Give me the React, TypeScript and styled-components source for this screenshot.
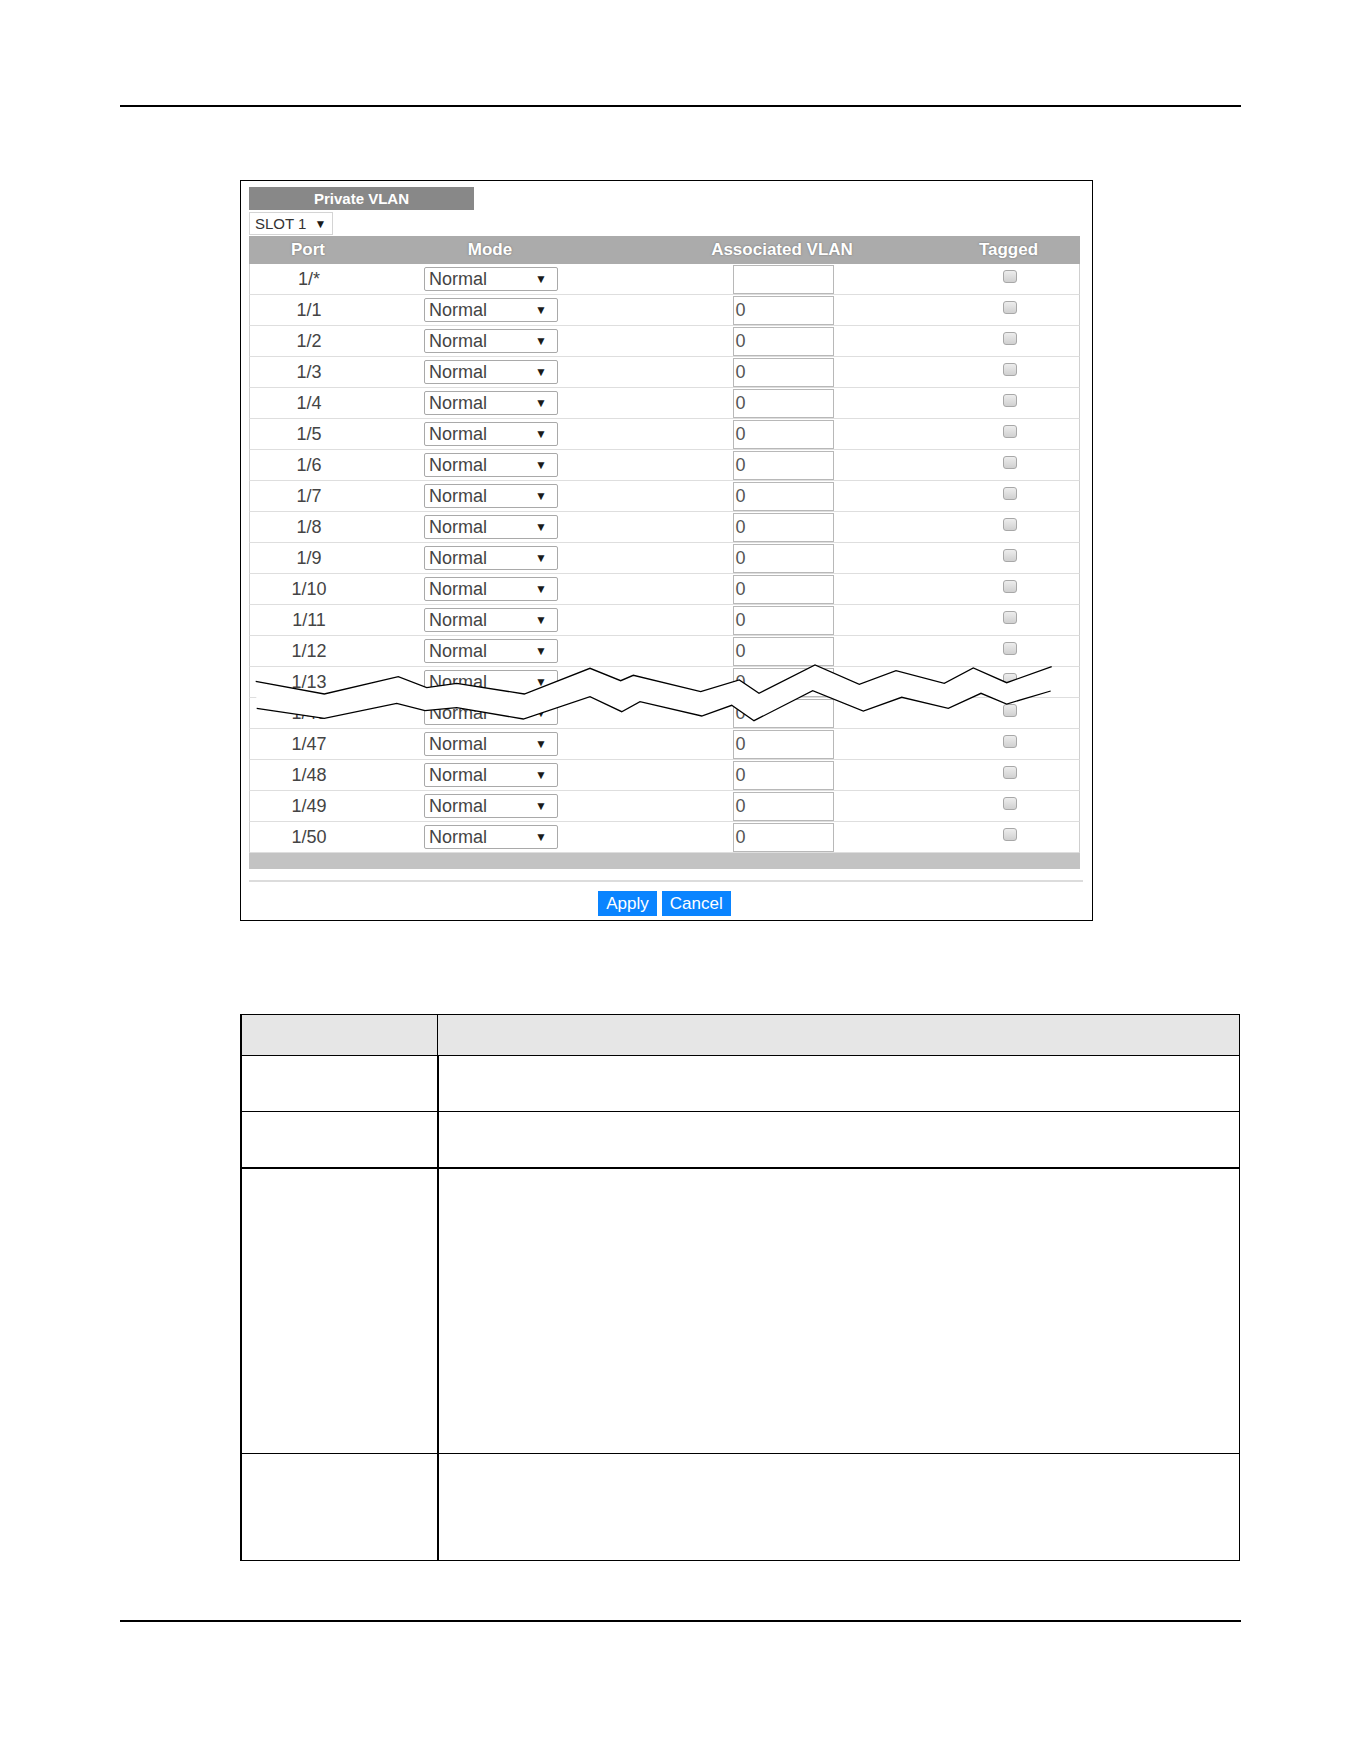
import styled, { createGlobalStyle } from 'styled-components';

const GlobalStyle = createGlobalStyle`
  body {
    margin: 0;
    background: #fff;
    font-family: "Liberation Sans", Arial, sans-serif;
  }
`;

const Page = styled.div`
  width: 1361px;
  min-height: 1761px;
  padding-top: 105px;
  box-sizing: border-box;
  display: flex;
  flex-direction: column;
`;

const Rule = styled.div<{ $top?: number }>`
  margin-left: 120px;
  margin-top: ${p => p.$top ?? 0}px;
  width: 1121px;
  height: 2px;
  background: #000;
`;

const Panel = styled.div`
  margin: 73px 0 0 240px;
  width: 853px;
  height: 741px;
  box-sizing: border-box;
  border: 1px solid #000;
  padding: 6px 0 0 8px;
  display: flex;
  flex-direction: column;
`;

const TitleBar = styled.div`
  width: 225px;
  height: 23px;
  background: #888;
  color: #fff;
  font-size: 15px;
  font-weight: bold;
  display: flex;
  align-items: center;
  justify-content: center;
`;

const SlotSelect = styled.div`
  margin-top: 2px;
  width: 84px;
  height: 23px;
  box-sizing: border-box;
  border: 1px solid #d4d4d4;
  padding-left: 5px;
  display: flex;
  align-items: center;
  gap: 8px;
  font-size: 15px;
  color: #333;
`;

const Arrow = styled.span`
  font-size: 12px;
  color: #1a1a1a;
`;

const Grid = styled.div`
  display: grid;
  grid-template-columns: 118px 246px 338px 129px;
  align-items: center;
  justify-items: center;
`;

const HeaderRow = styled(Grid)`
  margin-top: 1px;
  width: 831px;
  height: 28px;
  background: #ababab;
  color: #fff;
  font-size: 17px;
  font-weight: bold;
  text-shadow: 0 0 2px #6e6e6e;
`;

const TaggedCell = styled.div`
  justify-self: stretch;
  display: flex;
  justify-content: center;
  padding-right: 14px;
`;

const RowsBody = styled.div`
  position: relative;
  width: 831px;
`;

const Row = styled(Grid)`
  height: 31px;
  box-sizing: border-box;
  border-left: 1px solid #cfcfcf;
  border-right: 1px solid #cfcfcf;
  border-bottom: 1px solid #dedede;
  font-size: 18px;
  color: #444;
`;

const ModeSelect = styled.div`
  width: 134px;
  height: 24px;
  box-sizing: border-box;
  border: 1px solid #a9a9a9;
  border-radius: 2px;
  padding: 0 10px 0 4px;
  display: flex;
  align-items: center;
  justify-content: space-between;
  font-size: 18px;
  color: #444;
`;

const VlanInput = styled.div`
  width: 101px;
  height: 29px;
  box-sizing: border-box;
  border: 1px solid #b8b8b8;
  padding-left: 2px;
  display: flex;
  align-items: center;
  font-size: 18px;
  color: #555;
`;

const Check = styled.span`
  width: 14px;
  height: 13px;
  box-sizing: border-box;
  margin-bottom: 5px;
  border: 1px solid #a8a8a8;
  border-radius: 3px;
  background: linear-gradient(#ededed, #d0d0d0);
`;

const BreakMark = styled.svg`
  position: absolute;
  left: 0;
  top: 0;
  width: 831px;
  height: 589px;
  pointer-events: none;
`;

const GrayBar = styled.div`
  width: 831px;
  height: 16px;
  background: #c3c3c3;
`;

const Separator = styled.div`
  margin-top: 11px;
  width: 834px;
  height: 2px;
  background: #dcdcdc;
`;

const ButtonRow = styled.div`
  margin-top: 9px;
  width: 831px;
  display: flex;
  justify-content: center;
  gap: 5px;
`;

const Button = styled.button`
  height: 25px;
  padding: 0 8px;
  border: none;
  background: #0a84ff;
  color: #fff;
  font-family: "Liberation Sans", Arial, sans-serif;
  font-size: 17px;
`;

const DescTable = styled.table`
  margin: 93px 0 0 240px;
  width: 1000px;
  border-collapse: collapse;
  border-left: 2px solid #000;
`;

const HeadCell = styled.th<{ $w?: number }>`
  height: 40px;
  padding: 0;
  background: #e6e6e6;
  border: 1px solid #000;
  width: ${p => (p.$w ? `${p.$w}px` : 'auto')};
`;

const DescRow = styled.tr<{ $h: number; $thick?: boolean }>`
  height: ${p => p.$h}px;
  & > td {
    padding: 0;
    border: 1px solid #000;
    border-top-width: ${p => (p.$thick ? 2 : 1)}px;
  }
  & > td:first-child {
    border-right-width: 2px;
  }
`;

const ports = [
  '1/*', '1/1', '1/2', '1/3', '1/4', '1/5', '1/6', '1/7', '1/8', '1/9',
  '1/10', '1/11', '1/12', '1/13', '1/46', '1/47', '1/48', '1/49', '1/50',
];

// break mark across the skipped ports, in page coordinates
const upper =
  '255.7,681.3 324.3,694 398.3,676.7 426.7,687.7 456.7,683.3 524.3,694 590,668.3 620.7,680.7 633.3,675.3 700.7,691.7 739.3,680 759,693.3 815,665 859.3,684.3 896,670.7 944.3,683.3 973.3,668 1006.7,682.7 1051.7,666.7';
const lower =
  '256.7,708.3 324.3,718.3 396.7,703.3 425,710.7 456.7,707.7 523.3,719 590,696.7 621.7,711.7 640,701.7 701.7,716 731.7,705.3 754,720.7 812.7,690.7 863.3,711 901.7,697.3 948.3,708.3 981,693.3 1006.7,704 1050.7,691';
const gap = upper + ' ' + lower.split(' ').reverse().join(' ');

const App = () => {
  return (
    <Page>
      <GlobalStyle />
      <Rule />
      <Panel>
        <TitleBar>Private VLAN</TitleBar>
        <SlotSelect>
          SLOT 1 <Arrow>▼</Arrow>
        </SlotSelect>
        <HeaderRow>
          <div>Port</div>
          <div>Mode</div>
          <div>Associated VLAN</div>
          <TaggedCell>Tagged</TaggedCell>
        </HeaderRow>
        <RowsBody>
          {ports.map(port => (
            <Row key={port}>
              <div>{port}</div>
              <ModeSelect>
                Normal <Arrow>▼</Arrow>
              </ModeSelect>
              <VlanInput>{port === '1/*' ? '' : '0'}</VlanInput>
              <TaggedCell>
                <Check />
              </TaggedCell>
            </Row>
          ))}
          <BreakMark viewBox="249 264 831 589">
            <polygon points={gap} fill="#fff" />
            <polyline points={upper} fill="none" stroke="#000" strokeWidth="1.3" />
            <polyline points={lower} fill="none" stroke="#000" strokeWidth="1.3" />
          </BreakMark>
        </RowsBody>
        <GrayBar />
        <Separator />
        <ButtonRow>
          <Button>Apply</Button>
          <Button>Cancel</Button>
        </ButtonRow>
      </Panel>
      <DescTable>
        <thead>
          <tr>
            <HeadCell $w={195} />
            <HeadCell />
          </tr>
        </thead>
        <tbody>
          <DescRow $h={56}>
            <td />
            <td />
          </DescRow>
          <DescRow $h={56}>
            <td />
            <td />
          </DescRow>
          <DescRow $h={286} $thick>
            <td />
            <td />
          </DescRow>
          <DescRow $h={107}>
            <td />
            <td />
          </DescRow>
        </tbody>
      </DescTable>
      <Rule $top={59} />
    </Page>
  );
};

export default App;
